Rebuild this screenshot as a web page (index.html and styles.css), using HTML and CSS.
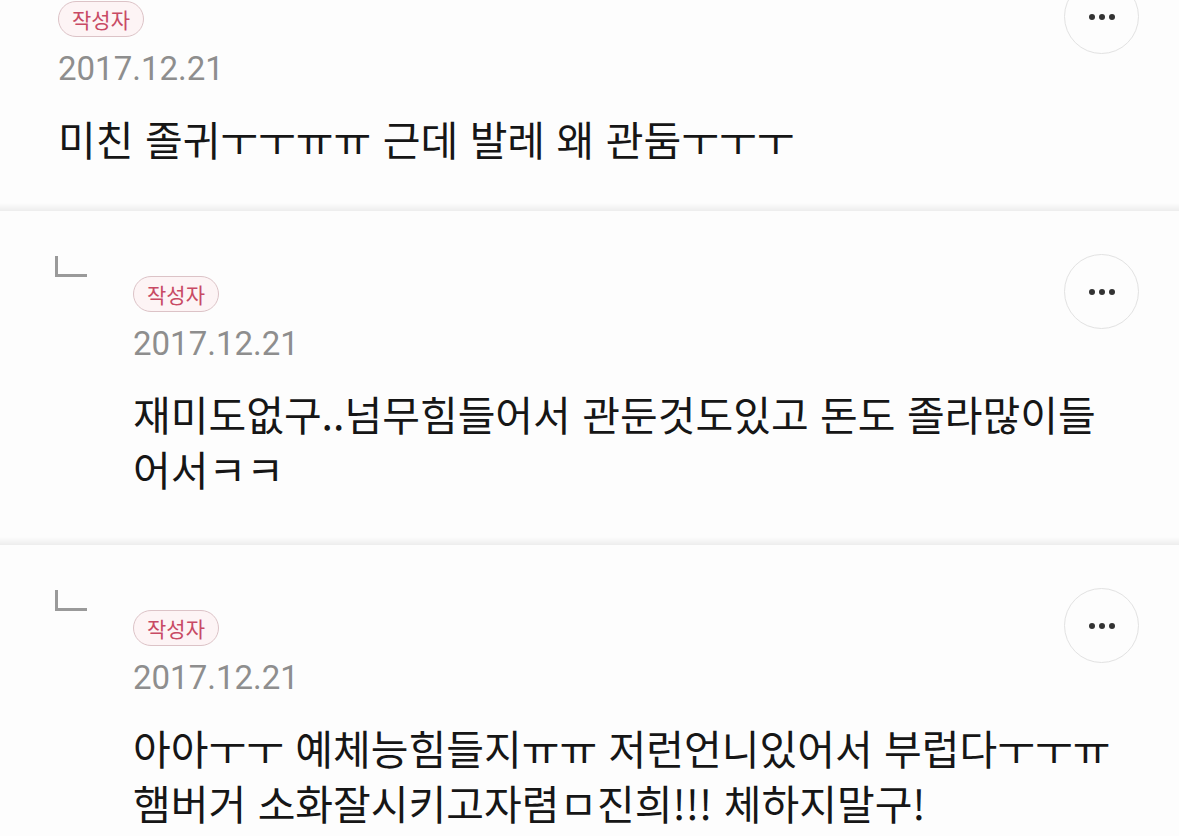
FILE: index.html
```html
<!DOCTYPE html>
<html lang="ko">
<head>
<meta charset="utf-8">
<link rel="stylesheet" href="styles.css">
</head>
<body>
<div class="thread">
  <div class="comment root">
    <div class="content">
      <div class="head">
        <div class="meta">
          <span class="badge">작성자</span>
          <div class="date">2017.12.21</div>
        </div>
        <button class="more" aria-label="더보기"><span class="dot"></span><span class="dot"></span><span class="dot"></span></button>
      </div>
      <p class="body">미친 졸귀ㅜㅜㅠㅠ 근데 발레 왜 관둠ㅜㅜㅜ</p>
    </div>
  </div>
  <div class="sep"></div>
  <div class="comment reply">
    <div class="mark"></div>
    <div class="content">
      <div class="head">
        <div class="meta">
          <span class="badge">작성자</span>
          <div class="date">2017.12.21</div>
        </div>
        <button class="more" aria-label="더보기"><span class="dot"></span><span class="dot"></span><span class="dot"></span></button>
      </div>
      <p class="body">재미도없구..넘무힘들어서 관둔것도있고 돈도 졸라많이들어서ㅋㅋ</p>
    </div>
  </div>
  <div class="sep"></div>
  <div class="comment reply">
    <div class="mark"></div>
    <div class="content">
      <div class="head">
        <div class="meta">
          <span class="badge">작성자</span>
          <div class="date">2017.12.21</div>
        </div>
        <button class="more" aria-label="더보기"><span class="dot"></span><span class="dot"></span><span class="dot"></span></button>
      </div>
      <p class="body">아아ㅜㅜ 예체능힘들지ㅠㅠ 저런언니있어서 부럽다ㅜㅜㅠ 햄버거 소화잘시키고자렴ㅁ진희!!! 체하지말구!</p>
    </div>
  </div>
</div>
</body>
</html>
```

FILE: styles.css
```css
html, body {
  margin: 0;
  padding: 0;
  background: #fdfdfd;
}
body {
  font-family: "Noto Sans CJK KR", "Noto Sans", sans-serif;
  color: #161616;
  overflow: hidden;
}
.thread {
  margin-top: -40px;
}
.comment {
  display: flex;
  padding: 41px 40px 41px 58px;
}
.root {
  padding-bottom: 37px;
}
.reply {
  padding-left: 55px;
}
.mark {
  flex: none;
  width: 32px;
  height: 21px;
  margin-top: 4px;
  margin-right: 46px;
  border-left: 3px solid #9a9a9a;
  border-bottom: 3px solid #9a9a9a;
  box-sizing: border-box;
}
.content {
  flex: 1;
  min-width: 0;
}
.reply .content {
  padding-top: 24px;
}
.head {
  display: flex;
  justify-content: space-between;
  align-items: flex-start;
}
.meta {
  display: flex;
  flex-direction: column;
  align-items: flex-start;
}
.badge {
  display: inline-flex;
  align-items: center;
  height: 36px;
  padding: 0 13px;
  box-sizing: border-box;
  border: 1.5px solid #dcc3c7;
  border-radius: 18px;
  background: #fdf4f5;
  color: #c84a64;
  font-size: 21px;
  line-height: 1;
}
.date {
  margin-top: 12px;
  font-family: Roboto, "Noto Sans", sans-serif;
  font-size: 33px;
  line-height: 40px;
  color: #8e8e8e;
}
.more {
  flex: none;
  width: 75px;
  height: 75px;
  margin-top: -22px;
  border: 1.5px solid #e2e2e2;
  border-radius: 50%;
  background: #fdfdfd;
  display: flex;
  align-items: center;
  justify-content: center;
  gap: 4px;
  padding: 0;
}
.dot {
  width: 6px;
  height: 6px;
  border-radius: 50%;
  background: #333;
}
.body {
  margin: 22px 0 0;
  padding-right: 14px;
  font-size: 41px;
  line-height: 55px;
}
.sep {
  height: 8px;
  background: linear-gradient(#fdfdfd, #ededed);
}
```
